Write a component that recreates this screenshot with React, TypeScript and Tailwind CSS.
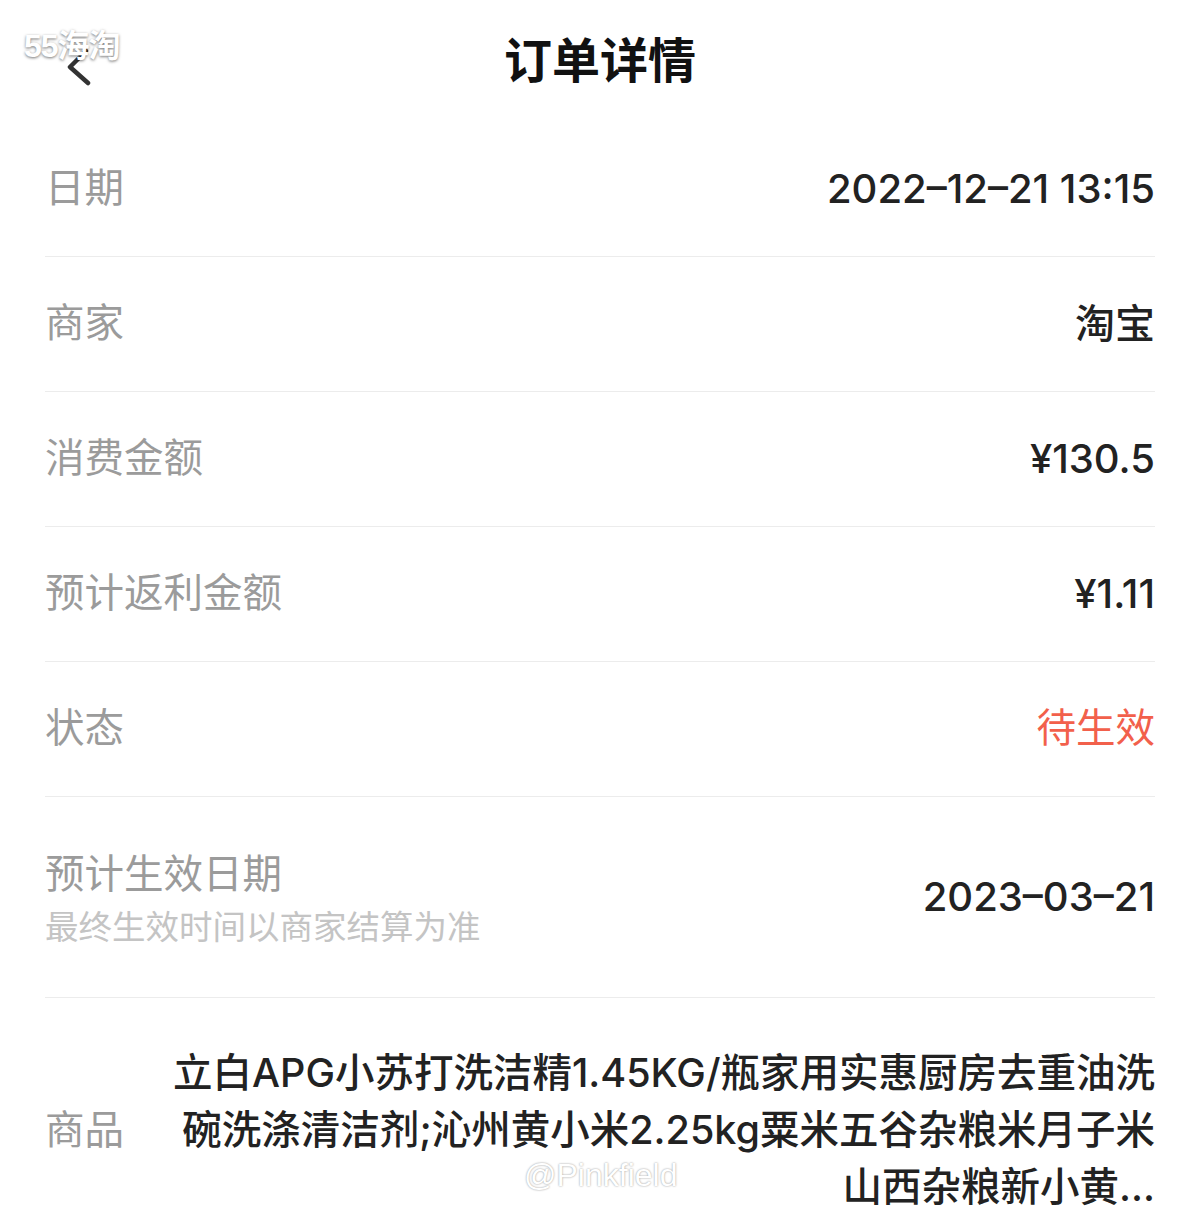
import React from "react";

const font = "font-['Inter','Noto_Sans_CJK_SC',sans-serif]";

function Row({ label, value, red }: { label: string; value: string; red?: boolean }) {
  return (
    <div className="flex h-[135px] items-center justify-between border-b border-[#ececec]">
      <span className="text-[39.5px] text-[#9b9b9b]">{label}</span>
      <span className={red ? "text-[39.5px] text-[#f2604b]" : "text-[40px] font-medium text-[#222]"}>{value}</span>
    </div>
  );
}

export default function App() {
  return (
    <div className={`relative min-h-[1219px] w-[1200px] overflow-hidden bg-white ${font}`}>
      {/* header */}
      <div className="relative flex h-[122px] items-center justify-center">
        <svg className="absolute left-[64px] top-[48px]" width="30" height="38" viewBox="0 0 30 38">
          <path d="M22 3 L6 19 L24 35" fill="none" stroke="#333" strokeWidth="4.5" strokeLinecap="round" strokeLinejoin="round" />
        </svg>
        <h1 className="text-[48px] font-bold text-[#111]">订单详情</h1>
      </div>

      <div className="px-[45px]">
        <Row label="日期" value="2022–12–21 13:15" />
        <Row label="商家" value="淘宝" />
        <Row label="消费金额" value="¥130.5" />
        <Row label="预计返利金额" value="¥1.11" />
        <Row label="状态" value="待生效" red />

        <div className="flex h-[201px] items-center justify-between border-b border-[#ececec]">
          <div className="flex flex-col pt-[4px]">
            <span className="text-[39.5px] leading-[50px] text-[#9b9b9b]">预计生效日期</span>
            <span className="mt-[6px] text-[33.5px] leading-[44px] text-[#c4c4c4]">最终生效时间以商家结算为准</span>
          </div>
          <span className="text-[40px] font-medium text-[#222]">2023–03–21</span>
        </div>

        <div className="flex items-center justify-between pt-[47px]">
          <span className="text-[39.5px] text-[#9b9b9b]">商品</span>
          <div className="flex flex-col items-end text-right text-[39.5px] font-medium leading-[57px] text-[#222]">
            <span>立白APG小苏打洗洁精1.45KG/瓶家用实惠厨房去重油洗</span>
            <span>碗洗涤清洁剂;沁州黄小米2.25kg粟米五谷杂粮米月子米</span>
            <span>山西杂粮新小黄...</span>
          </div>
        </div>
      </div>

      {/* watermarks */}
      <span className="absolute left-[24px] top-[22px] font-['Liberation_Sans','Noto_Sans_CJK_SC',sans-serif] text-[32px] font-bold tracking-[-1px] text-white [text-shadow:0_1px_3px_rgba(0,0,0,0.55)]">
        55海淘
      </span>
      <span className="absolute left-[524px] top-[1151px] font-['Liberation_Sans',sans-serif] text-[32px] text-white [text-shadow:0_0_2px_rgba(0,0,0,0.45)]">
        @Pinkfield
      </span>
    </div>
  );
}
